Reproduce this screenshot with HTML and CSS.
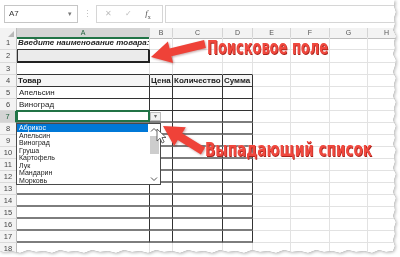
FILE: index.html
```html
<!DOCTYPE html>
<html lang="ru">
<head>
    <meta charset="UTF-8">
    <title>Выпадающий список</title>
    <link rel="stylesheet" href="styles.css">
</head>
<body>
<div class="frame">
    <div class="sheet">

        <!-- Formula bar -->
        <div class="formula-bar">
            <div class="name-box"><span>A7</span><span class="caret">&#9662;</span></div>
            <div class="dots">&#8942;</div>
            <div class="fx-box">
                <span class="fx-btn">&#10005;</span>
                <span class="fx-btn">&#10003;</span>
                <span class="fx-btn fx"><i>f</i><sub>x</sub></span>
            </div>
            <div class="formula-input"></div>
        </div>

        <!-- Column headers -->
        <div class="row head">
            <div class="corner"></div><div class="col-sel">A</div><div>B</div><div>C</div><div>D</div><div>E</div><div>F</div><div>G</div><div>H</div>
        </div>

        <!-- Rows -->
        <div class="row tall"><div class="rh">1</div><div class="title">Введите наименование товара:</div><div></div><div></div><div></div><div></div><div></div><div></div><div></div></div>
        <div class="row tall"><div class="rh">2</div><div class="search"></div><div></div><div></div><div></div><div></div><div></div><div></div><div></div></div>
        <div class="row"><div class="rh">3</div><div class="above"></div><div class="above"></div><div class="above"></div><div class="above"></div><div></div><div></div><div></div><div></div></div>
        <div class="row"><div class="rh">4</div><div class="t th">Товар</div><div class="t th">Цена</div><div class="t th">Количество</div><div class="t th">Сумма</div><div></div><div></div><div></div><div></div></div>
        <div class="row"><div class="rh">5</div><div class="t">Апельсин</div><div class="t"></div><div class="t"></div><div class="t"></div><div></div><div></div><div></div><div></div></div>
        <div class="row"><div class="rh">6</div><div class="t">Виноград</div><div class="t"></div><div class="t"></div><div class="t"></div><div></div><div></div><div></div><div></div></div>
        <div class="row"><div class="rh row-sel">7</div><div class="t t2 active"><span class="dd-btn">&#9662;</span></div><div class="t t2"></div><div class="t t2"></div><div class="t t2"></div><div></div><div></div><div></div><div></div></div>
        <div class="row"><div class="rh">8</div><div class="t t2"></div><div class="t t2"></div><div class="t t2"></div><div class="t t2"></div><div></div><div></div><div></div><div></div></div>
        <div class="row"><div class="rh">9</div><div class="t t2"></div><div class="t t2"></div><div class="t t2"></div><div class="t t2"></div><div></div><div></div><div></div><div></div></div>
        <div class="row"><div class="rh">10</div><div class="t t2"></div><div class="t t2"></div><div class="t t2"></div><div class="t t2"></div><div></div><div></div><div></div><div></div></div>
        <div class="row"><div class="rh">11</div><div class="t t2"></div><div class="t t2"></div><div class="t t2"></div><div class="t t2"></div><div></div><div></div><div></div><div></div></div>
        <div class="row"><div class="rh">12</div><div class="t t2"></div><div class="t t2"></div><div class="t t2"></div><div class="t t2"></div><div></div><div></div><div></div><div></div></div>
        <div class="row"><div class="rh">13</div><div class="t t2"></div><div class="t t2"></div><div class="t t2"></div><div class="t t2"></div><div></div><div></div><div></div><div></div></div>
        <div class="row"><div class="rh">14</div><div class="t t2"></div><div class="t t2"></div><div class="t t2"></div><div class="t t2"></div><div></div><div></div><div></div><div></div></div>
        <div class="row"><div class="rh">15</div><div class="t t2"></div><div class="t t2"></div><div class="t t2"></div><div class="t t2"></div><div></div><div></div><div></div><div></div></div>
        <div class="row"><div class="rh">16</div><div class="t t2"></div><div class="t t2"></div><div class="t t2"></div><div class="t t2"></div><div></div><div></div><div></div><div></div></div>
        <div class="row"><div class="rh">17</div><div class="t t2"></div><div class="t t2"></div><div class="t t2"></div><div class="t t2"></div><div></div><div></div><div></div><div></div></div>
        <div class="row"><div class="rh">18</div><div></div><div></div><div></div><div></div><div></div><div></div><div></div><div></div></div>

        <!-- Open validation list under A7 -->
        <div class="dd-list">
            <ul>
                <li class="sel">Абрикос</li>
                <li>Апельсин</li>
                <li>Виноград</li>
                <li>Груша</li>
                <li>Картофель</li>
                <li>Лук</li>
                <li>Мандарин</li>
                <li>Морковь</li>
            </ul>
            <div class="scroll">
                <svg width="8" height="6" viewBox="0 0 8 6"><path d="M1 4.5 L4 1.5 L7 4.5" fill="none" stroke="#555" stroke-width="1"/></svg>
                <div class="thumb"></div>
                <svg class="down" width="8" height="6" viewBox="0 0 8 6"><path d="M1 1.5 L4 4.5 L7 1.5" fill="none" stroke="#555" stroke-width="1"/></svg>
            </div>
        </div>

        <!-- Annotations -->
        <svg class="notes" width="400" height="257" viewBox="0 0 400 257">
            <g class="arrow">
                <polygon points="204.1,40.1 169.6,48.4 167.9,41.6 151,57 173.1,63 171.4,56.2 205.9,47.9"/>
                <polygon points="205.1,147.6 182.1,133.2 185.8,127.3 163,126 174.1,145.9 177.8,140 200.9,154.4"/>
            </g>
            <path d="M157 129 L157 141 L160 138.3 L162.2 143 L164.2 142 L162 137.5 L166 137.5 Z" fill="#fff" stroke="#444" stroke-width="0.8"/>
        </svg>
        <div class="note note-search">Поисковое поле</div>
        <div class="note note-list">Выпадающий список</div>
    </div>
</div>
</body>
</html>
```

FILE: styles.css
```css
body {
    margin: 0;
    background: #fff;
    font-family: "Liberation Sans", Arial, sans-serif;
    color: #222;
}

.frame {
    width: 400px;
    height: 257px;
    filter: drop-shadow(0 0 0.6px #777) drop-shadow(1px 1px 1.5px rgba(0, 0, 0, 0.25));
}

.sheet {
    position: relative;
    width: 398px;
    height: 255px;
    overflow: hidden;
    background: #fff;
    clip-path: polygon(0 0, 395px 0, 394px 6px, 396px 12px, 394px 18px, 395px 24px, 393px 30px, 396px 36px, 394px 42px, 395px 48px, 393px 54px, 396px 60px, 395px 66px, 393px 72px, 396px 78px, 394px 84px, 395px 90px, 393px 96px, 396px 102px, 394px 108px, 395px 114px, 393px 120px, 396px 126px, 394px 132px, 395px 138px, 393px 144px, 396px 150px, 394px 156px, 395px 162px, 393px 168px, 396px 174px, 394px 180px, 395px 186px, 393px 192px, 396px 198px, 394px 204px, 395px 210px, 393px 216px, 396px 222px, 394px 228px, 395px 234px, 393px 240px, 395px 246px, 393px 251px,
        386px 252px, 379px 250px, 372px 253px, 364px 251px, 356px 252px, 348px 250px, 340px 253px, 332px 251px, 324px 252px, 316px 250px, 308px 253px, 300px 251px, 292px 252px, 284px 250px, 276px 253px, 268px 251px, 260px 252px, 252px 250px, 244px 253px, 236px 251px, 228px 252px, 220px 250px, 212px 253px, 204px 251px, 196px 252px, 188px 250px, 180px 253px, 172px 251px, 164px 252px, 156px 250px, 148px 253px, 140px 251px, 132px 252px, 124px 250px, 116px 253px, 108px 251px, 100px 252px, 92px 250px, 84px 253px, 76px 251px, 68px 252px, 60px 250px, 52px 253px, 44px 251px, 36px 252px, 28px 250px, 20px 253px, 12px 251px, 4px 252px, 0 251px);
}

/* formula bar */
.formula-bar {
    display: flex;
    align-items: center;
    height: 28px;
    padding: 0 0 1px 4px;
    box-sizing: border-box;
}
.name-box {
    width: 74px;
    height: 18px;
    box-sizing: border-box;
    border: 1px solid #c6c6c6;
    display: flex;
    align-items: center;
    justify-content: space-between;
    padding: 0 5px 0 4px;
    font-size: 8px;
    color: #333;
}
.name-box .caret {
    font-size: 7px;
    color: #777;
}
.dots {
    width: 18px;
    text-align: center;
    font-size: 9px;
    color: #c0c0c0;
}
.fx-box {
    width: 67px;
    height: 18px;
    box-sizing: border-box;
    border: 1px solid #d6d6d6;
    display: flex;
    align-items: center;
    padding-left: 1px;
}
.fx-btn {
    width: 20px;
    text-align: center;
    font-size: 8px;
    color: #bdbdbd;
}
.fx-btn.fx {
    font-family: "Liberation Serif", serif;
    font-size: 9px;
    color: #555;
}
.fx-btn.fx sub {
    font-size: 6px;
}
.formula-input {
    flex: 1;
    height: 18px;
    box-sizing: border-box;
    border: 1px solid #d6d6d6;
    border-right: none;
    margin-left: 2px;
}

/* grid */
.row {
    display: grid;
    grid-template-columns: 17px 133px 23px 50px 30px 38px 39px 38px 38px;
    height: 12px;
}
.row.tall {
    height: 13px;
}
.row > div {
    position: relative;
    box-sizing: border-box;
    border-right: 1px solid #e2e2e2;
    border-bottom: 1px solid #e2e2e2;
    padding-left: 2px;
    font-size: 8px;
    line-height: 11px;
    white-space: nowrap;
}
.row.tall > div {
    line-height: 12px;
}

.row.head {
    height: 9px;
}
.row.head > div {
    background: #f3f3f3;
    border-right-color: #d4d4d4;
    border-bottom-color: #bdbdbd;
    padding: 0;
    text-align: center;
    font-size: 7px;
    line-height: 9px;
    color: #555;
}
.row.head > .col-sel {
    background: #d4d4d4;
    border-bottom: 2px solid #217346;
    color: #1d5f3a;
}
.row.head > .corner {
    border-right-color: #bdbdbd;
}
.corner::after {
    content: "";
    position: absolute;
    right: 2px;
    bottom: 1px;
    border-left: 6px solid transparent;
    border-bottom: 6px solid #b8b8b8;
}

.row > .rh {
    background: #f3f3f3;
    border-right-color: #bdbdbd;
    border-bottom-color: #dadada;
    padding: 0;
    text-align: center;
    font-size: 7.5px;
    color: #444;
}
.row > .rh.row-sel {
    background: #d4d4d4;
    border-right: 2px solid #217346;
    color: #1d5f3a;
}

.row > .title {
    font-weight: bold;
    font-style: italic;
    border-bottom-color: #333;
    padding-left: 1px;
}
.row > .search {
    background: #ebebeb;
    border-left: 1px solid #333;
    border-right: 2px solid #222;
    border-bottom: 2px solid #222;
}
.row > .above {
    border-bottom-color: #333;
}
.row > .t {
    border-right-color: #333;
    border-bottom-color: #333;
}
.row > .t2 {
    border-bottom: 2px solid #7d7d7d;
}
.row > .th {
    font-weight: bold;
    background: #f5f5f5;
    padding-left: 1px;
}
.row > .active::after {
    content: "";
    position: absolute;
    left: -1px;
    top: -1px;
    right: -1px;
    bottom: -1px;
    border: 2px solid #217346;
}
.dd-btn {
    position: absolute;
    left: 100%;
    top: 1px;
    width: 11px;
    height: 9px;
    margin-left: 1px;
    box-sizing: border-box;
    background: #f0f0f0;
    border: 1px solid #bdbdbd;
    font-size: 6px;
    line-height: 7px;
    text-align: center;
    color: #666;
    z-index: 1;
}

/* validation list */
.dd-list {
    position: absolute;
    left: 16px;
    top: 123px;
    width: 145px;
    height: 62px;
    box-sizing: border-box;
    border: 1px solid #4a4a4a;
    background: #fff;
    display: flex;
}
.dd-list ul {
    flex: 1;
    margin: 0;
    padding: 0;
    list-style: none;
    font-size: 7px;
    color: #222;
}
.dd-list li {
    height: 7.5px;
    line-height: 7.5px;
    padding-left: 2px;
}
.dd-list li.sel {
    background: #0078d7;
    color: #fff;
}
.scroll {
    width: 12px;
    display: flex;
    flex-direction: column;
    align-items: center;
    padding-top: 3px;
}
.scroll .thumb {
    width: 9px;
    height: 18px;
    margin-top: 3px;
    background: #cdcdcd;
}
.scroll .down {
    margin-top: auto;
    margin-bottom: 2px;
}

/* annotations */
.notes {
    position: absolute;
    left: 0;
    top: 0;
    pointer-events: none;
}
.arrow {
    fill: #ef4238;
    filter: drop-shadow(1px 1px 1px rgba(90, 0, 0, 0.35));
}
.note {
    position: absolute;
    font-family: "DejaVu Sans", sans-serif;
    font-weight: bold;
    font-size: 20px;
    line-height: 20px;
    color: #f0483e;
    white-space: nowrap;
    text-shadow: 1px 1px 0 #a8241c, 0 0 2px #fff;
    transform-origin: left center;
}
.note-search {
    left: 207px;
    top: 37px;
    transform: scaleX(0.65);
}
.note-list {
    left: 205px;
    top: 139px;
    transform: scaleX(0.68);
}
```
